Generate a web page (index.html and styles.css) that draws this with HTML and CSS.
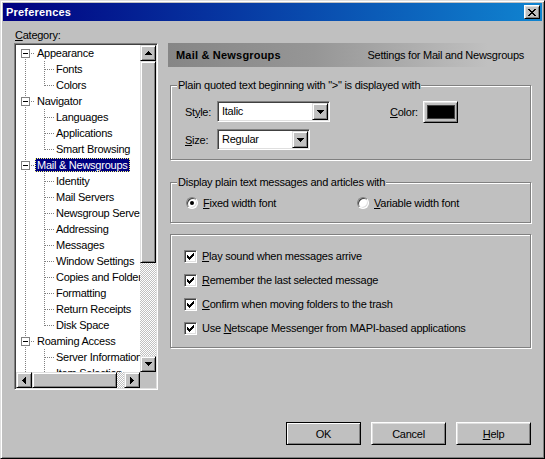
FILE: index.html
```html
<!DOCTYPE html>
<html>
<head>
<meta charset="utf-8">
<title>Preferences</title>
<link rel="stylesheet" href="styles.css">
</head>
<body>
<div class="window">
  <div class="titlebar">
    <span class="title">Preferences</span>
    <span class="close raised2"><svg width="8" height="7" viewBox="0 0 8 7" shape-rendering="crispEdges"><path fill="#000" d="M0 0h2v1H0zM6 0h2v1H6zM1 1h2v1H1zM5 1h2v1H5zM2 2h4v1H2zM3 3h2v1H3zM2 4h4v1H2zM1 5h2v1H1zM5 5h2v1H5zM0 6h2v1H0zM6 6h2v1H6z"/></svg></span>
  </div>
  <div class="main">
    <div class="left">
      <div class="cat-label"><u>C</u>ategory:</div>
      <div class="tree">
        <div class="rows">
          <div class="row top first"><span class="gut"><span class="exp"></span></span><span class="lbl">Appearance</span></div>
          <div class="row"><span class="gut"></span><span class="gut2"></span><span class="lbl">Fonts</span></div>
          <div class="row"><span class="gut"></span><span class="gut2 last"></span><span class="lbl">Colors</span></div>
          <div class="row top"><span class="gut"><span class="exp"></span></span><span class="lbl">Navigator</span></div>
          <div class="row"><span class="gut"></span><span class="gut2"></span><span class="lbl">Languages</span></div>
          <div class="row"><span class="gut"></span><span class="gut2"></span><span class="lbl">Applications</span></div>
          <div class="row"><span class="gut"></span><span class="gut2 last"></span><span class="lbl">Smart Browsing</span></div>
          <div class="row top"><span class="gut"><span class="exp"></span></span><span class="lbl sel">Mail &amp; Newsgroups</span></div>
          <div class="row"><span class="gut"></span><span class="gut2"></span><span class="lbl">Identity</span></div>
          <div class="row"><span class="gut"></span><span class="gut2"></span><span class="lbl">Mail Servers</span></div>
          <div class="row"><span class="gut"></span><span class="gut2"></span><span class="lbl">Newsgroup Servers</span></div>
          <div class="row"><span class="gut"></span><span class="gut2"></span><span class="lbl">Addressing</span></div>
          <div class="row"><span class="gut"></span><span class="gut2"></span><span class="lbl">Messages</span></div>
          <div class="row"><span class="gut"></span><span class="gut2"></span><span class="lbl">Window Settings</span></div>
          <div class="row"><span class="gut"></span><span class="gut2"></span><span class="lbl">Copies and Folders</span></div>
          <div class="row"><span class="gut"></span><span class="gut2"></span><span class="lbl">Formatting</span></div>
          <div class="row"><span class="gut"></span><span class="gut2"></span><span class="lbl">Return Receipts</span></div>
          <div class="row"><span class="gut"></span><span class="gut2 last"></span><span class="lbl">Disk Space</span></div>
          <div class="row top"><span class="gut"><span class="exp"></span></span><span class="lbl">Roaming Access</span></div>
          <div class="row"><span class="gut"></span><span class="gut2"></span><span class="lbl">Server Information</span></div>
          <div class="row"><span class="gut"></span><span class="gut2 last"></span><span class="lbl">Item Selection</span></div>
        </div>
        <div class="vs">
          <span class="sbtn raised"><svg width="7" height="4" viewBox="0 0 7 4" shape-rendering="crispEdges"><path d="M3 0h1v1H3zM2 1h3v1H2zM1 2h5v1H1zM0 3h7v1H0z"/></svg></span>
          <span class="vthumb raised"></span>
          <span class="track"></span>
          <span class="sbtn raised"><svg width="7" height="4" viewBox="0 0 7 4" shape-rendering="crispEdges"><path d="M0 0h7v1H0zM1 1h5v1H1zM2 2h3v1H2zM3 3h1v1H3z"/></svg></span>
        </div>
        <div class="hs">
          <span class="sbtn raised"><svg width="4" height="7" viewBox="0 0 4 7" shape-rendering="crispEdges"><path d="M0 3h1v1H0zM1 2h1v3H1zM2 1h1v5H2zM3 0h1v7H3z"/></svg></span>
          <span class="hthumb raised"></span>
          <span class="track"></span>
          <span class="sbtn raised"><svg width="4" height="7" viewBox="0 0 4 7" shape-rendering="crispEdges"><path d="M0 0h1v7H0zM1 1h1v5H1zM2 2h1v3H2zM3 3h1v1H3z"/></svg></span>
        </div>
        <div class="corner"></div>
      </div>
    </div>
    <div class="right">
      <div class="header">
        <span class="h-title">Mail &amp; Newsgroups</span>
        <span class="h-sub">Settings for Mail and Newsgroups</span>
      </div>
      <div class="group g1">
        <span class="legend">Plain quoted text beginning with "&gt;" is displayed with</span>
        <div class="frow">
          <span class="flabel">St<u>y</u>le:</span>
          <div class="select w-style"><span class="sel-text">Italic</span><span class="dd raised"><svg width="7" height="4" viewBox="0 0 7 4" shape-rendering="crispEdges"><path d="M0 0h7v1H0zM1 1h5v1H1zM2 2h3v1H2zM3 3h1v1H3z"/></svg></span></div>
          <span class="clabel"><u>C</u>olor:</span>
          <span class="colorbtn raised2"><span class="swatch"></span></span>
        </div>
        <div class="frow">
          <span class="flabel"><u>S</u>ize:</span>
          <div class="select w-size"><span class="sel-text">Regular</span><span class="dd raised"><svg width="7" height="4" viewBox="0 0 7 4" shape-rendering="crispEdges"><path d="M0 0h7v1H0zM1 1h5v1H1zM2 2h3v1H2zM3 3h1v1H3z"/></svg></span></div>
        </div>
      </div>
      <div class="group g2">
        <span class="legend">Display plain text messages and articles with</span>
        <div class="radios">
          <span class="opt"><span class="radio"><span class="dot"></span></span><span><u>F</u>ixed width font</span></span>
          <span class="opt"><span class="radio"></span><span><u>V</u>ariable width font</span></span>
        </div>
      </div>
      <div class="group g3">
        <div class="chk-row"><span class="chk"><svg width="7" height="7" viewBox="0 0 7 7" shape-rendering="crispEdges"><path d="M0 2h1v3H0zM1 3h1v3H1zM2 4h1v3H2zM3 3h1v3H3zM4 2h1v3H4zM5 1h1v3H5zM6 0h1v3H6z"/></svg></span><span><u>P</u>lay sound when messages arrive</span></div>
        <div class="chk-row"><span class="chk"><svg width="7" height="7" viewBox="0 0 7 7" shape-rendering="crispEdges"><path d="M0 2h1v3H0zM1 3h1v3H1zM2 4h1v3H2zM3 3h1v3H3zM4 2h1v3H4zM5 1h1v3H5zM6 0h1v3H6z"/></svg></span><span><u>R</u>emember the last selected message</span></div>
        <div class="chk-row"><span class="chk"><svg width="7" height="7" viewBox="0 0 7 7" shape-rendering="crispEdges"><path d="M0 2h1v3H0zM1 3h1v3H1zM2 4h1v3H2zM3 3h1v3H3zM4 2h1v3H4zM5 1h1v3H5zM6 0h1v3H6z"/></svg></span><span><u>C</u>onfirm when moving folders to the trash</span></div>
        <div class="chk-row"><span class="chk"><svg width="7" height="7" viewBox="0 0 7 7" shape-rendering="crispEdges"><path d="M0 2h1v3H0zM1 3h1v3H1zM2 4h1v3H2zM3 3h1v3H3zM4 2h1v3H4zM5 1h1v3H5zM6 0h1v3H6z"/></svg></span><span>Use <u>N</u>etscape Messenger from MAPI-based applications</span></div>
      </div>
    </div>
  </div>
  <div class="footer">
    <button class="btn default">OK</button>
    <button class="btn">Cancel</button>
    <button class="btn"><u>H</u>elp</button>
  </div>
</div>
</body>
</html>
```

FILE: styles.css
```css
body {
  margin: 0;
  background: #c0c0c0;
  font: 11px "Liberation Sans", Arial, sans-serif;
  letter-spacing: -0.25px;
  color: #000;
}

u { text-decoration: underline; text-underline-offset: 1px; }

.window {
  width: 545px;
  height: 459px;
  box-sizing: border-box;
  border: 1px solid;
  border-color: #dfdfdf #000 #000 #dfdfdf;
  box-shadow: inset 1px 1px #fff, inset -1px -1px #808080;
  padding: 2px;
  display: flex;
  flex-direction: column;
  background: #c0c0c0;
}

.titlebar {
  height: 18px;
  flex: none;
  display: flex;
  align-items: center;
  justify-content: space-between;
  padding: 0 2px 0 3px;
  background: linear-gradient(to right, #000080, #1084d0);
}

.title {
  color: #fff;
  font-weight: bold;
  letter-spacing: 0.2px;
}

.raised {
  box-sizing: border-box;
  border: 1px solid;
  border-color: #dfdfdf #000 #000 #dfdfdf;
  box-shadow: inset 1px 1px #fff, inset -1px -1px #808080;
  background: #c0c0c0;
}

.raised2 {
  box-sizing: border-box;
  border: 1px solid;
  border-color: #fff #000 #000 #fff;
  box-shadow: inset 1px 1px #dfdfdf, inset -1px -1px #808080;
  background: #c0c0c0;
}

.close {
  width: 16px;
  height: 14px;
  display: flex;
  align-items: center;
  justify-content: center;
}

.main {
  display: flex;
  gap: 10px;
  padding: 8px 10px 0 11px;
}

.left {
  width: 144px;
  flex: none;
}

.cat-label {
  height: 14px;
  line-height: 13px;
  padding-left: 1px;
}

.tree {
  width: 144px;
  height: 347px;
  box-sizing: border-box;
  border: 1px solid;
  border-color: #808080 #fff #fff #808080;
  box-shadow: inset 1px 1px #404040, inset -1px -1px #dfdfdf;
  padding: 1px;
  background: #fff;
  display: grid;
  grid-template-columns: 124px 16px;
  grid-template-rows: 327px 16px;
}

.rows {
  overflow: hidden;
  white-space: nowrap;
}

.row {
  display: flex;
  align-items: center;
  height: 16px;
}

.gut {
  width: 19px;
  height: 16px;
  flex: none;
  box-sizing: border-box;
  padding: 4px 0 0 5px;
  background: repeating-linear-gradient(to bottom, #808080 0 1px, transparent 1px 2px) 9px 0 / 1px 16px no-repeat;
}

.top .gut {
  background:
    repeating-linear-gradient(to right, #808080 0 1px, transparent 1px 2px) 15px 8px / 4px 1px no-repeat,
    repeating-linear-gradient(to bottom, #808080 0 1px, transparent 1px 2px) 9px 0 / 1px 16px no-repeat;
}

.top.first .gut {
  background:
    repeating-linear-gradient(to right, #808080 0 1px, transparent 1px 2px) 15px 8px / 4px 1px no-repeat,
    repeating-linear-gradient(to bottom, #808080 0 1px, transparent 1px 2px) 9px 8px / 1px 8px no-repeat;
}

.exp {
  display: block;
  width: 9px;
  height: 9px;
  box-sizing: border-box;
  border: 1px solid #808080;
  background: linear-gradient(#000, #000) center / 5px 1px no-repeat, #fff;
}

.gut2 {
  width: 19px;
  height: 16px;
  flex: none;
  background:
    repeating-linear-gradient(to right, #808080 0 1px, transparent 1px 2px) 10px 8px / 9px 1px no-repeat,
    repeating-linear-gradient(to bottom, #808080 0 1px, transparent 1px 2px) 9px 0 / 1px 16px no-repeat;
}

.gut2.last {
  background:
    repeating-linear-gradient(to right, #808080 0 1px, transparent 1px 2px) 10px 8px / 9px 1px no-repeat,
    repeating-linear-gradient(to bottom, #808080 0 1px, transparent 1px 2px) 9px 0 / 1px 9px no-repeat;
}

.lbl {
  padding: 0 2px;
  height: 14px;
  line-height: 14px;
}

.lbl.sel {
  background: #000080;
  color: #fff;
  outline: 1px dotted #ffff80;
  outline-offset: -1px;
}

.vs {
  display: flex;
  flex-direction: column;
}

.hs {
  display: flex;
}

.sbtn {
  width: 16px;
  height: 16px;
  flex: none;
  display: flex;
  align-items: center;
  justify-content: center;
}

.vthumb {
  height: 202px;
  flex: none;
}

.hthumb {
  width: 85px;
  flex: none;
}

.track {
  flex: 1;
  background: repeating-conic-gradient(#fff 0 25%, #c0c0c0 0 50%) 0 0 / 2px 2px;
}

.corner {
  background: #c0c0c0;
}

.right {
  flex: 1;
  padding-top: 14px;
  display: flex;
  flex-direction: column;
}

.header {
  height: 24px;
  display: flex;
  align-items: center;
  justify-content: space-between;
  padding: 0 8px;
  background: linear-gradient(to right, #868686 0%, #969696 40%, #c0c0c0 88%);
}

.h-title {
  font-weight: bold;
  letter-spacing: 0.2px;
}

.group {
  position: relative;
  box-sizing: border-box;
  margin: 0 1px 0 2px;
  border: 1px solid #808080;
  box-shadow: inset 1px 1px #fff, 1px 1px #fff;
}

.legend {
  position: absolute;
  top: -7px;
  left: 6px;
  padding: 0 1px;
  line-height: 13px;
  background: #c0c0c0;
  white-space: nowrap;
}

.g1 {
  margin-top: 18px;
  height: 75px;
  padding: 15px 0 0 14px;
}

.g2 {
  margin-top: 22px;
  height: 41px;
  padding: 12px 0 0 15px;
}

.g3 {
  margin-top: 11px;
  height: 114px;
  padding: 9px 0 0 13px;
}

.frow {
  display: flex;
  align-items: center;
  height: 21px;
}

.frow + .frow {
  margin-top: 7px;
}

.flabel {
  width: 32px;
  flex: none;
}

.select {
  box-sizing: border-box;
  height: 21px;
  border: 1px solid;
  border-color: #808080 #fff #fff #808080;
  box-shadow: inset 1px 1px #404040, inset -1px -1px #dfdfdf;
  padding: 1px;
  background: #fff;
  display: flex;
}

.w-style { width: 113px; }
.w-size { width: 93px; }

.sel-text {
  flex: 1;
  padding-left: 3px;
  line-height: 17px;
}

.dd {
  width: 16px;
  height: 17px;
  display: flex;
  align-items: center;
  justify-content: center;
}

.clabel {
  margin-left: 60px;
  width: 33px;
}

.colorbtn {
  width: 35px;
  height: 22px;
  display: flex;
  align-items: center;
  justify-content: center;
}

.swatch {
  width: 28px;
  height: 14px;
  box-sizing: border-box;
  border: 1px solid #404040;
  background: #000;
}

.radios {
  display: grid;
  grid-template-columns: 171px auto;
  height: 16px;
  align-items: center;
}

.opt {
  display: flex;
  align-items: center;
  gap: 5px;
}

.radio {
  width: 12px;
  height: 12px;
  box-sizing: border-box;
  border-radius: 50%;
  border: 1px solid;
  border-color: #808080 #fff #fff #808080;
  box-shadow: inset 1px 1px #404040, inset -1px -1px #dfdfdf;
  background: #fff;
  display: flex;
  align-items: center;
  justify-content: center;
}

.dot {
  width: 4px;
  height: 4px;
  border-radius: 50%;
  background: #000;
}

.chk-row {
  display: flex;
  align-items: center;
  gap: 5px;
  height: 24px;
}

.chk {
  width: 13px;
  height: 13px;
  flex: none;
  box-sizing: border-box;
  border: 1px solid;
  border-color: #808080 #fff #fff #808080;
  box-shadow: inset 1px 1px #404040, inset -1px -1px #dfdfdf;
  background: #fff;
  display: flex;
  align-items: center;
  justify-content: center;
}

.footer {
  margin-top: auto;
  display: flex;
  justify-content: flex-end;
  gap: 10px;
  padding: 0 11px 11px 0;
}

.btn {
  width: 75px;
  height: 23px;
  padding: 0;
  font: inherit;
  letter-spacing: -0.25px;
  color: #000;
  background: #c0c0c0;
  border: 1px solid;
  border-color: #fff #000 #000 #fff;
  box-shadow: inset 1px 1px #dfdfdf, inset -1px -1px #808080;
}

.btn.default {
  border-color: #000;
  box-shadow: inset 1px 1px #fff, inset -1px -1px #808080;
}
```
